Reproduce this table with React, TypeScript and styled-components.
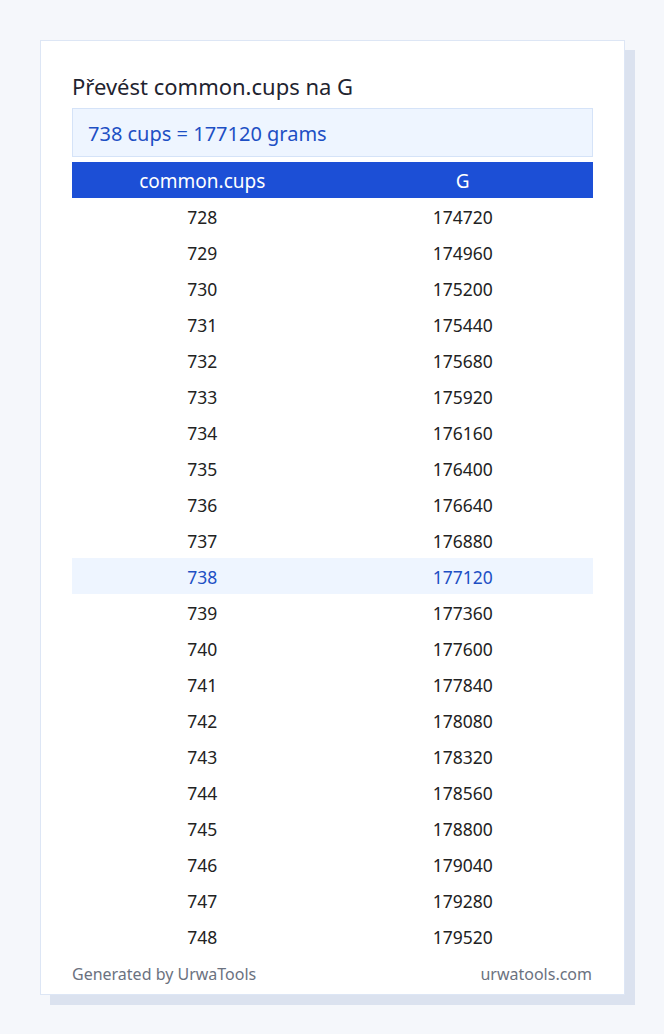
import React from "react";
import styled, { createGlobalStyle } from "styled-components";

const GlobalStyle = createGlobalStyle`
  html, body {
    margin: 0;
    padding: 0;
    background-color: #f5f7fb;
    font-family: "Noto Sans", "Open Sans", sans-serif;
  }
`;

const Page = styled.div`
  padding: 40px 39px 39px 40px;
`;

const Card = styled.div`
  width: 521px;
  padding: 31px 31px 0 31px;
  background-color: #ffffff;
  border: 1px solid #dde6f5;
  box-shadow: 10px 10px 0 #dbe2ef;
`;

const Title = styled.h2`
  margin: 0 0 8px 0;
  font-size: 22px;
  font-weight: 400;
  line-height: 28px;
  color: #1f2430;
`;

const Result = styled.div`
  box-sizing: border-box;
  height: 49px;
  display: flex;
  align-items: center;
  padding: 2px 15px 0 15px;
  background-color: #eef5ff;
  border: 1px solid #d5e3f8;
  color: #1d4fc4;
  font-size: 20px;
`;

const Table = styled.table`
  width: 100%;
  margin-top: 5px;
  border-collapse: collapse;
  table-layout: fixed;
`;

const HeadRow = styled.tr`
  height: 36px;
  background-color: #1c4fd6;
`;

const HeadCell = styled.th`
  padding: 2px 0 0 0;
  color: #ffffff;
  font-size: 19px;
  font-weight: 400;
  text-align: center;
`;

const Row = styled.tr<{ $active: boolean }>`
  height: 36px;
  background-color: ${(p) => (p.$active ? "#eef5ff" : "transparent")};
  color: ${(p) => (p.$active ? "#1d4fc4" : "#222222")};
`;

const Cell = styled.td`
  padding: 2px 0 0 0;
  font-size: 17.5px;
  text-align: center;
`;

const Footer = styled.div`
  display: flex;
  justify-content: space-between;
  align-items: center;
  height: 40px;
  padding: 0 1px 0 0;
  color: #6b7280;
  font-size: 16px;
`;

const rows = Array.from({ length: 21 }, (_, i) => 728 + i);

const App: React.FC = () => {
  return (
    <>
      <GlobalStyle />
      <Page>
        <Card>
          <Title>Převést common.cups na G</Title>
          <Result>738 cups = 177120 grams</Result>
          <Table>
            <thead>
              <HeadRow>
                <HeadCell>common.cups</HeadCell>
                <HeadCell>G</HeadCell>
              </HeadRow>
            </thead>
            <tbody>
              {rows.map((cups) => (
                <Row key={cups} $active={cups === 738}>
                  <Cell>{cups}</Cell>
                  <Cell>{cups * 240}</Cell>
                </Row>
              ))}
            </tbody>
          </Table>
          <Footer>
            <span>Generated by UrwaTools</span>
            <span>urwatools.com</span>
          </Footer>
        </Card>
      </Page>
    </>
  );
};

export default App;
